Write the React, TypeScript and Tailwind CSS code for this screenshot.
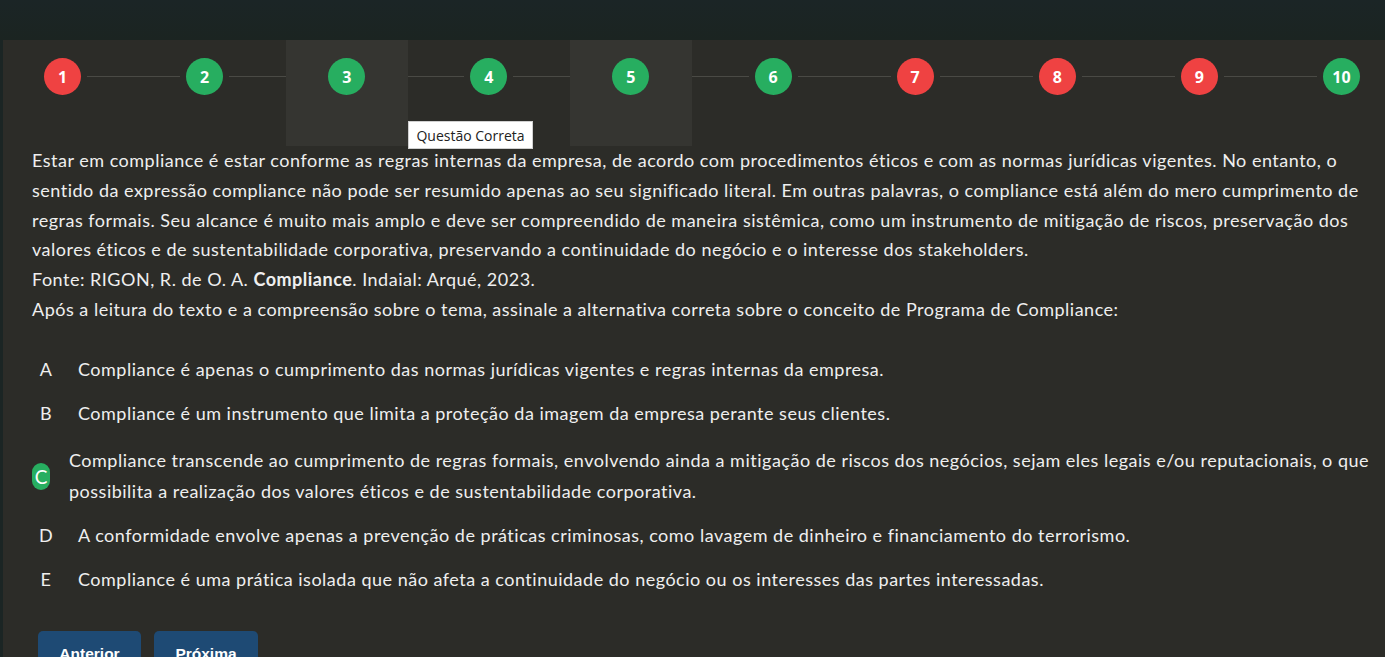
import React from "react";

const steps: { n: number; c: "r" | "g"; hl?: boolean }[] = [
  { n: 1, c: "r" },
  { n: 2, c: "g" },
  { n: 3, c: "g", hl: true },
  { n: 4, c: "g" },
  { n: 5, c: "g", hl: true },
  { n: 6, c: "g" },
  { n: 7, c: "r" },
  { n: 8, c: "r" },
  { n: 9, c: "r" },
  { n: 10, c: "g" },
];

const options = [
  { l: "A", t: ["Compliance é apenas o cumprimento das normas jurídicas vigentes e regras internas da empresa."] },
  { l: "B", t: ["Compliance é um instrumento que limita a proteção da imagem da empresa perante seus clientes."] },
  {
    l: "C",
    t: [
      "Compliance transcende ao cumprimento de regras formais, envolvendo ainda a mitigação de riscos dos negócios, sejam eles legais e/ou reputacionais, o que",
      "possibilita a realização dos valores éticos e de sustentabilidade corporativa.",
    ],
    ok: true,
  },
  { l: "D", t: ["A conformidade envolve apenas a prevenção de práticas criminosas, como lavagem de dinheiro e financiamento do terrorismo."] },
  { l: "E", t: ["Compliance é uma prática isolada que não afeta a continuidade do negócio ou os interesses das partes interessadas."] },
];

const para = [
  "Estar em compliance é estar conforme as regras internas da empresa, de acordo com procedimentos éticos e com as normas jurídicas vigentes. No entanto, o",
  "sentido da expressão compliance não pode ser resumido apenas ao seu significado literal. Em outras palavras, o compliance está além do mero cumprimento de",
  "regras formais. Seu alcance é muito mais amplo e deve ser compreendido de maneira sistêmica, como um instrumento de mitigação de riscos, preservação dos",
  "valores éticos e de sustentabilidade corporativa, preservando a continuidade do negócio e o interesse dos stakeholders.",
];

export default function App() {
  return (
    <div className="w-[1385px] h-[657px] overflow-hidden bg-[#1b2524] flex flex-col" style={{ fontFamily: "Lato, 'Noto Sans', sans-serif" }}>
      <div className="h-[40px] shrink-0 bg-gradient-to-b from-[#1b2526] to-[#1b2421]" />
      <div className="ml-[3px] flex-1 bg-[#2c2c28] relative text-[#efefef]">
        {/* stepper */}
        <div className="relative flex pl-[41px] pr-[25px] pt-[18px] h-[106px] items-start">
          {steps.map((s, i) => (
            <React.Fragment key={s.n}>
              {i > 0 && <div className="flex-1 h-px bg-[#4a4a45] mx-[6px] mt-[18px]" />}
              <div className="relative w-[37px] h-[37px] shrink-0">
                {s.hl && <div className="absolute left-[-42px] top-[-18px] w-[122px] h-[106px] bg-[#353531]" />}
                <div
                  className={`relative w-[37px] h-[37px] rounded-full flex items-center justify-center text-white font-bold text-[16px] ${
                    s.c === "r" ? "bg-[#ef4242]" : "bg-[#27ae60]"
                  }`}
                  style={{ fontFamily: "'Open Sans', sans-serif" }}
                >
                  {s.n}
                </div>
              </div>
            </React.Fragment>
          ))}
          <div
            className="absolute left-[405px] top-[81px] w-[125px] h-[28px] bg-white border border-[#d0d0d0] text-[#222] text-[14px] flex items-center justify-center"
            style={{ fontFamily: "'Open Sans', sans-serif" }}
          >
            Questão Correta
          </div>
        </div>

        <div className="pl-[29px] text-[18px] leading-[29.8px] tracking-[0.5px] whitespace-nowrap">
          <p>
            {para.map((l, i) => (
              <React.Fragment key={i}>
                {l}
                {i < para.length - 1 && <br />}
              </React.Fragment>
            ))}
          </p>
          <p>
            Fonte: RIGON, R. de O. A. <b className="font-bold">Compliance</b>. Indaial: Arqué, 2023.
          </p>
          <p>Após a leitura do texto e a compreensão sobre o tema, assinale a alternativa correta sobre o conceito de Programa de Compliance:</p>
        </div>

        <div className="mt-[29px] flex flex-col pl-[29px] text-[18px] leading-[30px] tracking-[0.5px] whitespace-nowrap">
          {options.map((o) =>
            o.ok ? (
              <div key={o.l} className="flex items-center mt-[5px] mb-[13px] leading-[31px]">
                <div className="w-[18px] h-[27px] rounded-full bg-[#27ae60] text-white flex items-center justify-center shrink-0 text-[19px] tracking-normal">
                  {o.l}
                </div>
                <div className="ml-[19px] -mt-[2px]">
                  {o.t[0]}
                  <br />
                  {o.t[1]}
                </div>
              </div>
            ) : (
              <div key={o.l} className="flex items-center mb-[14px]">
                <div className="w-[30px] text-center shrink-0 pr-[2px]">{o.l}</div>
                <div className="ml-[16px]">{o.t[0]}</div>
              </div>
            )
          )}
        </div>

        <div className="absolute left-[35px] top-[591px] flex gap-[13px]" style={{ fontFamily: "'Liberation Sans', Arial, sans-serif" }}>
          <button className="w-[103px] h-[40px] rounded-t-[5px] bg-[#1e4a74] text-white font-bold text-[15.5px] pt-[11px] flex justify-center items-start">
            Anterior
          </button>
          <button className="w-[104px] h-[40px] rounded-t-[5px] bg-[#1e4a74] text-white font-bold text-[15.5px] pt-[11px] flex justify-center items-start">
            Próxima
          </button>
        </div>
      </div>
    </div>
  );
}
